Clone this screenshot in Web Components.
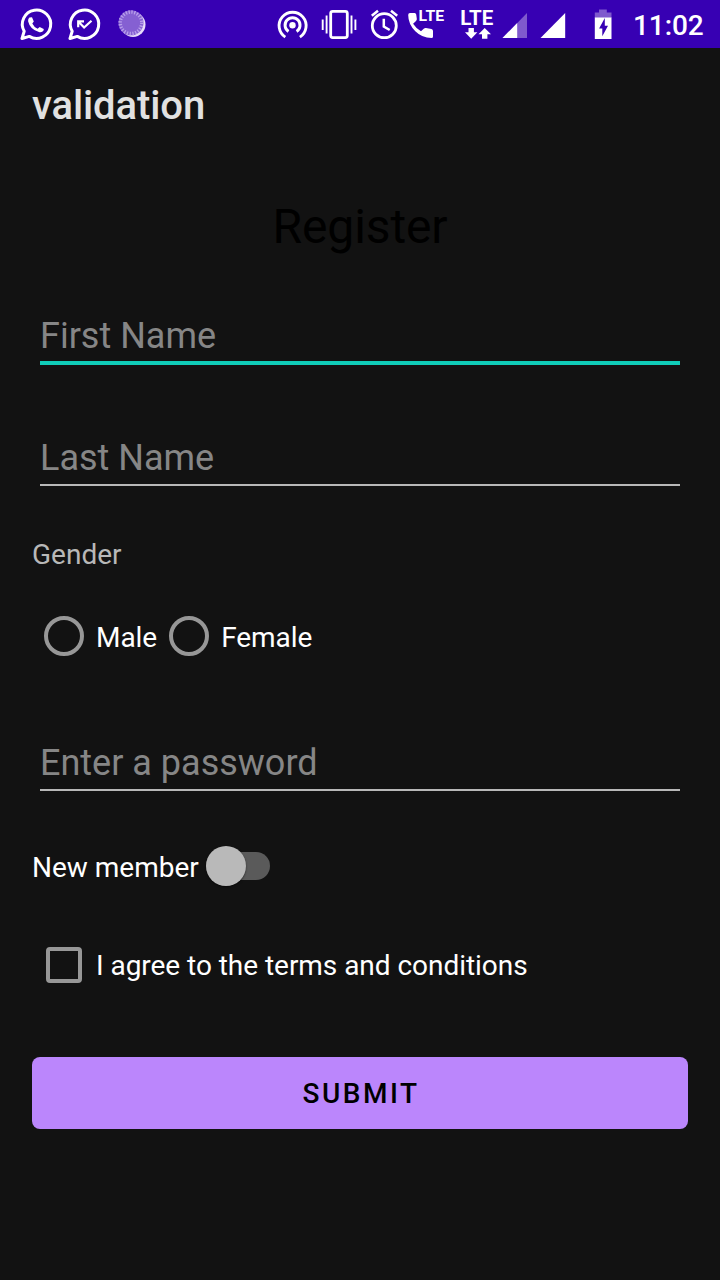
<!DOCTYPE html>
<html lang="en">
<head>
<meta charset="utf-8">
<title>validation</title>
<style>
  html, body { margin: 0; background: #121212; }
  body { font-family: Roboto, "Liberation Sans", sans-serif; }
</style>
</head>
<body>
<register-screen></register-screen>

<script>
const define = (name, html) => {
  const template = document.createElement('template');
  template.innerHTML = html;
  customElements.define(name, class extends HTMLElement {
    constructor() {
      super();
      this.attachShadow({ mode: 'open' }).append(template.content.cloneNode(true));
    }
  });
};

/* Each status icon is drawn in bar coordinates, cropped by its viewBox. */
define('status-bar', `
  <style>
    :host { display: flex; height: 48px; background: #3700b3; color: #fff; justify-content: space-between; box-sizing: border-box; padding: 0 16px 0 18px; }
    .group { display: flex; }
    svg { display: block; height: 48px; fill: none; stroke: none; }
    text { fill: #fff; font-family: Roboto, sans-serif; font-weight: 700; }
    time { font-size: 28px; font-weight: 500; line-height: 51px; width: 71px; white-space: nowrap; letter-spacing: -.1px; }
  </style>
  <div class="group">
    <svg width="48" viewBox="18 0 48 48">
      <path d="M22 38.5 24.2 31.2A14.2 14.2 0 1 1 29.3 36.4Z" stroke="#fff" stroke-width="3" stroke-linejoin="round"/>
      <path d="M29.4 17.6 32 17.2 33.8 21.4 32.3 23.6Q34 27.3 37.6 28.8L39.7 27 43.7 28.9V30.2Q42.2 32.8 38.9 32Q30 29.4 28.1 21.2Q27.9 18.9 29.4 17.6Z" fill="#fff"/>
    </svg>
    <svg width="48" viewBox="66 0 48 48">
      <path d="M70 38.5 72.2 31.2A14.2 14.2 0 1 1 77.3 36.4Z" stroke="#fff" stroke-width="3" stroke-linejoin="round"/>
      <path d="M78.2 27.2V21.4H84M78.5 21.7 84.1 27.5 91.5 20.8" stroke="#fff" stroke-width="2.2"/>
    </svg>
    <svg width="36" viewBox="114 0 36 48">
      <circle cx="133" cy="24.5" r="12.5" fill="#e8dcfa"/>
      <circle cx="131" cy="22.8" r="12.5" fill="#8560d2"/>
      <circle cx="131" cy="22.8" r="10.8" stroke="#b9a0eb" stroke-width="3.5" stroke-dasharray="1.3 1.53"/>
    </svg>
  </div>
  <div class="group">
    <svg width="44" viewBox="272 0 44 48">
      <circle cx="292.5" cy="25.2" r="3.2" fill="#fff"/>
      <path d="M285.3 37.1A13.5 13.5 0 1 1 299.9 37.1M288.5 31.5A7.5 7.5 0 1 1 296.6 31.5" stroke="#fff" stroke-width="2.9"/>
    </svg>
    <svg width="46" viewBox="316 0 46 48">
      <rect x="330.7" y="11.4" width="16.6" height="26.2" rx="2" stroke="#fff" stroke-width="2.8"/>
      <path d="M322.7 19.5V30M326.6 15.5V33.5M351.5 15.5V33.5M355.4 19.5V30" stroke="#fff" stroke-width="1.9"/>
    </svg>
    <svg width="44" viewBox="362 0 44 48">
      <circle cx="384.3" cy="25.7" r="12" stroke="#fff" stroke-width="2.8"/>
      <path d="M383.8 18.8V26.5L389.7 30M371.8 15.8 378 10.7M391 10.7 397.2 15.8" stroke="#fff" stroke-width="2.5"/>
    </svg>
    <svg width="48" viewBox="406 0 48 48">
      <path d="M410 13H414.6Q416 13 416.2 14.5L416.8 18.8Q417 20 416 21L413.1 23.8Q416 28.5 421 31.2L424 28.4Q424.8 27.8 426 28L431.5 29.1Q433 29.4 433 31V36.4Q433 38 431.5 38Q422 38 415.3 31.3Q408.2 24 408.2 15Q408.2 13 410 13Z" fill="#fff"/>
      <text x="418.6" y="21.3" font-size="15.5" textLength="25.5" lengthAdjust="spacingAndGlyphs">LTE</text>
    </svg>
    <svg width="46" viewBox="454 0 46 48">
      <text x="460.2" y="25" font-size="19.5" textLength="33" lengthAdjust="spacingAndGlyphs">LTE</text>
      <path d="M468.5 28H473.9V32.2H477.4L471.2 38.7 465 32.2H468.5ZM482 38.7H487.4V34.3H491L484.7 28 478.5 34.3H482Z" fill="#fff"/>
    </svg>
    <svg width="34" viewBox="500 0 34 48">
      <path d="M527 13V38H502.5Z" fill="#7f59cd"/>
      <path d="M517.2 23V38H502.5Z" fill="#fff"/>
    </svg>
    <svg width="40" viewBox="534 0 40 48"><path d="M565.2 13V38H540.5Z" fill="#fff"/></svg>
    <svg width="59" viewBox="574 0 59 48">
      <path d="M594.8 18V12.6H599V9.6H606.8V12.6H611.5V18Z" fill="#7f59cd"/>
      <path d="M594.8 17.5H611.5V39H594.8Z" fill="#fff"/>
      <path d="M604.8 18 599.1 28.4H602.3V36.2L608 25.8H604.8Z" fill="#3700b3"/>
    </svg>
    <time>11:02</time>
  </div>
`);

define('app-bar', `
  <style>
    :host { display: block; height: 112px; padding-left: 32px; font-size: 40px; font-weight: 500; line-height: 116px; letter-spacing: -.1px; color: #e1e1e1; }
  </style>
  <slot></slot>
`);

define('text-field', `
  <style>
    :host { display: flex; flex-direction: column; justify-content: flex-end; height: 76px; margin: 0 8px; font-size: 36px; color: #868686; }
    .hint { line-height: 42px; padding-bottom: 5px; }
    .line { height: 2px; background: #b8b8b8; }
    :host([active]) .hint { padding-bottom: 4px; }
    :host([active]) .line { height: 4px; background: #10cdb9; }
  </style>
  <div class="hint"><slot></slot></div>
  <div class="line"></div>
`);

define('radio-option', `
  <style>
    :host { display: flex; align-items: center; height: 64px; font-size: 28px; color: #fff; }
    i { box-sizing: border-box; width: 40px; height: 40px; border: 4px solid #979797; border-radius: 50%; margin: 0 12px 0 12px; }
    span { line-height: 34px; padding-top: 3px; letter-spacing: -.05px; }
  </style>
  <i></i><span><slot></slot></span>
`);

define('toggle-switch', `
  <style>
    :host { display: flex; align-items: center; height: 54px; font-size: 28px; color: #fff; }
    span { line-height: 34px; padding-top: 3px; width: 173.5px; white-space: nowrap; }
    .track { display: flex; align-items: center; width: 64px; height: 28px; border-radius: 14px; background: #5a5a5a; }
    .thumb { width: 40px; height: 40px; flex: none; border-radius: 50%; background: #b9b9b9; box-shadow: 0 1px 2px #0008; }
  </style>
  <span><slot></slot></span>
  <div class="track"><div class="thumb"></div></div>
`);

define('check-option', `
  <style>
    :host { display: flex; align-items: center; height: 64px; font-size: 28px; color: #fff; }
    i { box-sizing: border-box; width: 36px; height: 36px; border: 4px solid #979797; border-radius: 4px; margin: 0 14px; }
    span { line-height: 34px; padding-top: 2px; white-space: nowrap; letter-spacing: -.04px; }
  </style>
  <i></i><span><slot></slot></span>
`);

define('submit-button', `
  <style>
    :host { display: block; }
    button { display: block; width: 100%; height: 72px; padding: 1px 0 0 2px; border: 0; border-radius: 8px; background: #bb86fc; color: #000; font: 500 28px Roboto, sans-serif; letter-spacing: 2.5px; }
  </style>
  <button type="button"><slot></slot></button>
`);

define('register-screen', `
  <style>
    :host { display: flex; flex-direction: column; height: 1280px; background: #121212; }
    form { display: flex; flex-direction: column; padding: 0 32px; }
    h1 { margin: 38px 0 0; font-size: 48px; font-weight: 400; line-height: 58px; text-align: center; letter-spacing: -.1px; color: #000; }
    .first { margin-top: 33px; }
    .last { margin-top: 45px; }
    .label { margin-top: 52px; font-size: 28px; line-height: 34px; color: #b8b8b8; }
    .radios { display: flex; margin-top: 32px; }
    .password { margin-top: 47px; }
    .member { margin-top: 48px; }
    .terms { margin-top: 40px; }
    .submit { margin-top: 60px; }
  </style>
  <status-bar></status-bar>
  <app-bar>validation</app-bar>
  <form>
    <h1>Register</h1>
    <text-field class="first" active>First Name</text-field>
    <text-field class="last">Last Name</text-field>
    <div class="label">Gender</div>
    <div class="radios"><radio-option>Male</radio-option><radio-option>Female</radio-option></div>
    <text-field class="password">Enter a password</text-field>
    <toggle-switch class="member">New member</toggle-switch>
    <check-option class="terms">I agree to the terms and conditions</check-option>
    <submit-button class="submit">SUBMIT</submit-button>
  </form>
`);
</script>
</body>
</html>
